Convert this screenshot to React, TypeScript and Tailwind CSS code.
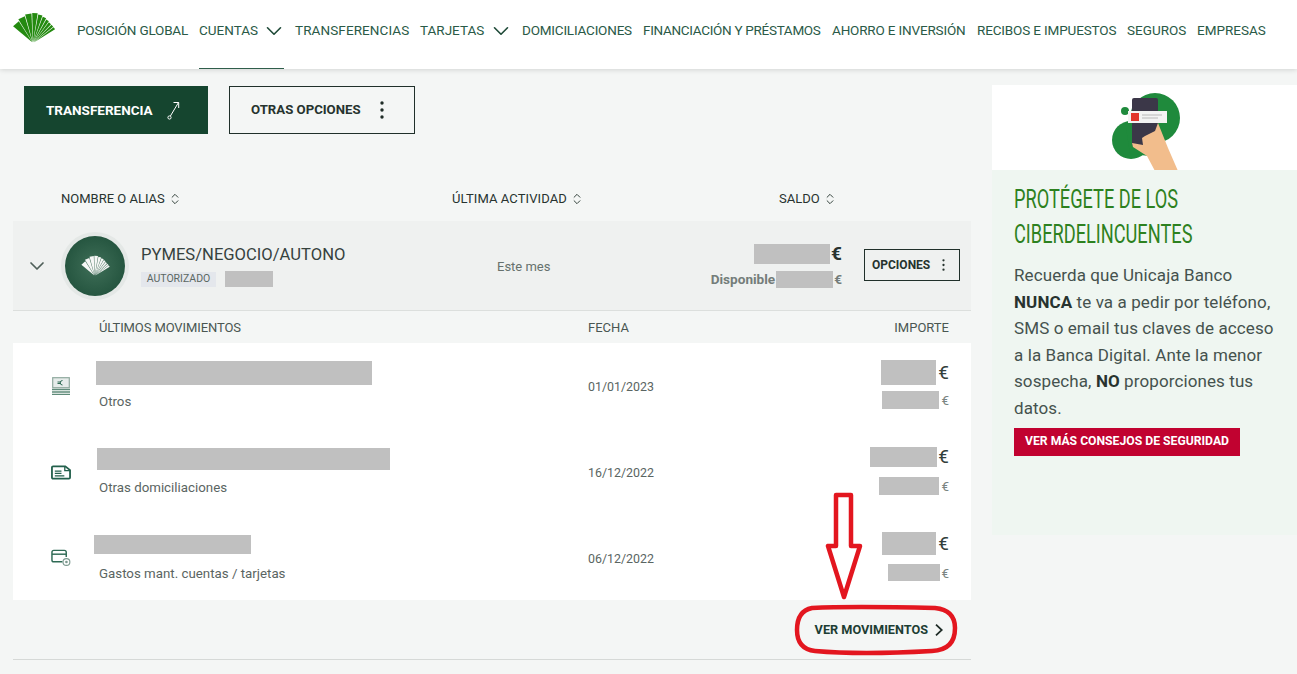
import { ChevronDown, ChevronsUpDown } from "lucide-react";

const FONT = "font-['Roboto',sans-serif]";

const WEDGES: [number, number, number][] = [
  [-50, -33, 26], [-31.5, -17, 28], [-15.5, -3, 29.5], [-1.5, 9, 30], [10.5, 19, 29],
  [20.5, 28, 28], [29.5, 36, 27], [37.5, 44, 26], [45.5, 51, 26], [52.5, 58, 26],
];

function Fan({ color, className }: { color: string; className: string }) {
  const pt = (a: number, l: number) => {
    const r = (a * Math.PI) / 180;
    return `${(22 + Math.sin(r) * l).toFixed(2)} ${(31 - Math.cos(r) * l).toFixed(2)}`;
  };
  return (
    <svg viewBox="0 0 46 34" className={className}>
      {WEDGES.map(([a, b, l]) => (
        <path key={a} d={`M${pt(a, 1)} L${pt(a, l)} L${pt(b, l)} Z`} fill={color} />
      ))}
    </svg>
  );
}

function Nav({ label, w, chevron, active }: { label: string; w: string; chevron?: boolean; active?: boolean }) {
  return (
    <div className={`relative flex h-full items-center whitespace-nowrap pb-[8px] text-[13.5px] text-[#2a5a47] ${w}`}>
      <span>{label}</span>
      {chevron && <ChevronDown className="ml-auto -mr-[3px] size-[26px] text-[#1f4a38]" strokeWidth={1.5} />}
      {active && <span className="absolute bottom-0 left-0 right-0 h-[1px] bg-[#2f5e4b]" />}
    </div>
  );
}

function Kebab({ className }: { className: string }) {
  return (
    <svg viewBox="0 0 4 18" className={className} fill="currentColor">
      <circle cx="2" cy="2" r="1.7" />
      <circle cx="2" cy="9" r="1.7" />
      <circle cx="2" cy="16" r="1.7" />
    </svg>
  );
}

function Sort({ label, className }: { label: string; className: string }) {
  return (
    <div className={`flex items-center text-[13px] leading-4 text-[#27332f] ${className}`}>
      <span className="whitespace-nowrap">{label}</span>
      <ChevronsUpDown className="ml-[3px] size-[14px] text-[#33423c]" strokeWidth={1.7} />
    </div>
  );
}

function Gray({ className }: { className: string }) {
  return <div className={`bg-[#c0c0c0] ${className}`} />;
}

function MoneyIcon() {
  return (
    <svg viewBox="0 0 18 18" className="size-[18px]">
      <rect x="0.7" y="0.7" width="16.6" height="10" fill="#e6ecea" stroke="#8fa99e" strokeWidth="1.2" />
      <path d="M10.5 3.5 A2.2 2.2 0 1 0 10.5 8 M5.5 5 H9 M5.5 6.5 H9" fill="none" stroke="#2f6b55" strokeWidth="1" />
      <path d="M0 12.5 H18 M0 15 H18 M0 17.4 H18" stroke="#5f8b7a" strokeWidth="1.3" />
    </svg>
  );
}
function DocIcon() {
  return (
    <svg viewBox="0 0 21 15" className="h-[15px] w-[21px]" fill="none" stroke="#23604c" strokeWidth="1.9">
      <path d="M1 2.2 Q1 1 2.2 1 H15 L20 5 V12.8 Q20 14 18.8 14 H2.2 Q1 14 1 12.8 Z" />
      <path d="M14.5 1 V5.5 H20 M4 6 H11 M4 8.5 H11 M4 11 H14" strokeWidth="1.4" />
    </svg>
  );
}
function CardIcon() {
  return (
    <svg viewBox="0 0 21 18" className="h-[18px] w-[21px]" fill="none" stroke="#2e6a55" strokeWidth="1.5">
      <path d="M12 13 H3 Q1 13 1 11 V3 Q1 1 3 1 H14 Q16 1 16 3 V8" />
      <path d="M1 5 H16" />
      <circle cx="16.2" cy="13.2" r="3.6" stroke="#7d9a90" strokeWidth="1.2" />
      <circle cx="16.2" cy="13.2" r="1.4" fill="#7d9a90" stroke="none" />
    </svg>
  );
}

function Row({
  h, icon, left, top, blockW, blockH, gap, sub, date, amtTop, bigW, bigH, smallW, smallH, amtGap, bigMr, smallMr,
}: {
  h: string; icon: React.ReactNode; left: string; top: string; blockW: string; blockH: string; gap: string; sub: string; date: string;
  amtTop: string; bigW: string; bigH: string; smallW: string; smallH: string; amtGap: string; bigMr: string; smallMr: string;
}) {
  return (
    <div className={`flex ${h}`}>
      <div className="ml-[38px] flex w-[20px] items-center justify-center">{icon}</div>
      <div className={`w-[517px] ${top}`}>
        <Gray className={`${left} ${blockW} ${blockH}`} />
        <div className={`ml-[28px] text-[13.3px] leading-4 text-[#5a6562] ${gap}`}>{sub}</div>
      </div>
      <div className="flex w-[200px] items-center pt-[3px] text-[12.4px] text-[#5a6562]">{date}</div>
      <div className={`flex flex-1 flex-col items-end pr-[22px] ${amtTop}`}>
        <div className="flex items-center">
          <Gray className={`${bigW} ${bigH} ${bigMr}`} />
          <span className="text-[19px] leading-5 text-[#33403c]">€</span>
        </div>
        <div className={`flex items-center ${amtGap}`}>
          <Gray className={`${smallW} ${smallH} ${smallMr}`} />
          <span className="text-[13.5px] leading-4 text-[#7a8582]">€</span>
        </div>
      </div>
    </div>
  );
}

export default function App() {
  return (
    <div className={`relative h-screen overflow-hidden bg-[#f4f6f5] ${FONT}`}>
      <header className="relative z-10 flex h-[69px] bg-white shadow-[0_1px_5px_rgba(0,0,0,0.14)]">
        <div className="w-[77px] shrink-0 pl-[11px] pt-[12px]">
          <Fan color="#248a10" className="h-[34px] w-[46px]" />
        </div>
        <div className="flex h-full items-stretch gap-[11px]">
          <Nav label="POSICIÓN GLOBAL" w="w-[111px] tracking-[-0.2px]" />
          <Nav label="CUENTAS" w="w-[85px]" chevron active />
          <Nav label="TRANSFERENCIAS" w="w-[114px] tracking-[0.1px]" />
          <Nav label="TARJETAS" w="w-[91px]" chevron />
          <Nav label="DOMICILIACIONES" w="w-[110px] tracking-[-0.2px]" />
          <Nav label="FINANCIACIÓN Y PRÉSTAMOS" w="w-[178px] tracking-[-0.3px]" />
          <Nav label="AHORRO E INVERSIÓN" w="w-[134px] tracking-[-0.17px]" />
          <Nav label="RECIBOS E IMPUESTOS" w="w-[139px] tracking-[-0.15px]" />
          <Nav label="SEGUROS" w="w-[59px]" />
          <Nav label="EMPRESAS" w="w-[68px]" />
        </div>
      </header>

      <div className="flex">
        <main className="w-[971px] shrink-0 pl-[13px]">
          <div className="flex gap-[21px] pl-[11px] pt-[17px]">
            <button className="flex h-[48px] w-[184px] items-center bg-[#15452f] pl-[22px] text-[13.5px] font-bold text-white">
              TRANSFERENCIA
              <svg viewBox="0 0 14 20" className="ml-[14px] h-[20px] w-[14px]" fill="none" stroke="#ffffff" strokeWidth="1">
                <circle cx="2.5" cy="17.5" r="1.6" />
                <path d="M3.4 16 L11.5 2.5 M6.5 2.5 H11.7 V8" />
              </svg>
            </button>
            <button className="flex h-[48px] w-[186px] items-center border border-[#20302a] pl-[21px] text-[13.2px] font-bold text-[#26332e]">
              OTRAS OPCIONES
              <Kebab className="ml-[19px] h-[18px] w-[4px] text-[#1f2c27]" />
            </button>
          </div>

          <div className="mt-[57px] flex h-[16px]">
            <Sort label="NOMBRE O ALIAS" className="ml-[48px] w-[391px]" />
            <Sort label="ÚLTIMA ACTIVIDAD" className="w-[327px] tracking-[0.1px]" />
            <Sort label="SALDO" className="" />
          </div>

          <div className="mt-[14px] flex h-[90px] items-center border-b border-[#dcdfdd] bg-[#eff1f0]">
            <ChevronDown className="ml-[12px] size-[24px] text-[#4f5f59]" strokeWidth={1.7} />
            <div className="ml-[16px] flex size-[60px] items-center justify-center rounded-full bg-[radial-gradient(circle,#3f6f58,#1b4b36)] shadow-[0_0_0_4px_#e4e8e6]">
              <Fan color="#f6f7f6" className="mt-[2px] h-[23px] w-[31px]" />
            </div>
            <div className="ml-[16px] w-[356px]">
              <div className="text-[16.6px] leading-[22px] text-[#36423e]">PYMES/NEGOCIO/AUTONO</div>
              <div className="mt-[5px] flex items-center">
                <span className="flex h-[15px] w-[75px] items-center justify-center bg-[#e4e7ec] text-[10.5px] text-[#5b6763]">AUTORIZADO</span>
                <Gray className="ml-[9px] h-[16px] w-[48px]" />
              </div>
            </div>
            <div className="w-[180px] pt-[2px] text-[13px] text-[#66716d]">Este mes</div>
            <div className="flex w-[165px] flex-col items-end">
              <div className="flex items-center">
                <Gray className="h-[20px] w-[76px]" />
                <span className="ml-[1px] text-[19px] font-bold leading-5 text-[#27332f]">€</span>
              </div>
              <div className="mt-[7px] flex items-center text-[13.6px] font-bold leading-[17px] text-[#747d7a]">
                <span>Disponible</span>
                <Gray className="ml-[1px] h-[17px] w-[57px]" />
                <span className="ml-[1px]">€</span>
              </div>
            </div>
            <button className="mb-[2px] ml-[22px] flex h-[32px] w-[96px] items-center border border-[#20302a] pl-[7px] text-[12px] font-bold text-[#26332e]">
              OPCIONES
              <Kebab className="ml-[12px] h-[12px] w-[3px] text-[#26332e]" />
            </button>
          </div>

          <div className="flex h-[32px] items-center pt-[2px] text-[13px] text-[#4a5652]">
            <div className="w-[575px] pl-[86px] tracking-[-0.1px]">ÚLTIMOS MOVIMIENTOS</div>
            <div className="w-[200px]">FECHA</div>
            <div className="flex-1 pr-[22px] text-right">IMPORTE</div>
          </div>

          <div className="bg-white">
            <Row h="h-[86px]" icon={<MoneyIcon />} left="ml-[25px]" top="pt-[18px]" blockW="w-[276px]" blockH="h-[24px]" gap="mt-[9px]" sub="Otros" date="01/01/2023"
              amtTop="pt-[17px]" bigW="w-[55px]" bigH="h-[25px]" smallW="w-[57px]" smallH="h-[18px]" amtGap="mt-[6px]" bigMr="mr-[2px]" smallMr="mr-[2px]" />
            <Row h="h-[86px]" icon={<DocIcon />} left="ml-[26px]" top="pt-[19px]" blockW="w-[293px]" blockH="h-[22px]" gap="mt-[10px]" sub="Otras domiciliaciones" date="16/12/2022"
              amtTop="pt-[18px]" bigW="w-[67px]" bigH="h-[20px]" smallW="w-[60px]" smallH="h-[18px]" amtGap="mt-[10px]" bigMr="mr-[1px]" smallMr="mr-[2px]" />
            <Row h="h-[85px]" icon={<CardIcon />} left="ml-[23px]" top="pt-[20px]" blockW="w-[157px]" blockH="h-[19px]" gap="mt-[12px]" sub="Gastos mant. cuentas / tarjetas" date="06/12/2022"
              amtTop="pt-[17px]" bigW="w-[54px]" bigH="h-[23px]" smallW="w-[52px]" smallH="h-[17px]" amtGap="mt-[9px]" bigMr="mr-[2px]" smallMr="mr-[1px]" />
          </div>

          <div className="flex h-[60px] items-center justify-end border-b border-[#d6d9d7] pr-[28px] pt-[1px] text-[12.7px] font-bold text-[#1d3d33]">
            VER MOVIMIENTOS
            <svg viewBox="0 0 8 12" className="ml-[7px] h-[12px] w-[8px]" fill="none" stroke="#1f2c27" strokeWidth="1.8">
              <path d="M1 0.7 L6.8 6 L1 11.3" />
            </svg>
          </div>
        </main>

        <aside className="ml-[21px] w-[305px] shrink-0 pt-[16px]">
          <div className="flex h-[85px] justify-center overflow-hidden bg-white pl-[2px]">
            <svg viewBox="0 0 90 84" className="mt-[3px] h-[84px] w-[90px] -translate-x-[1px]">
              <circle cx="31" cy="52" r="19" fill="#1f8a3c" />
              <circle cx="55" cy="30" r="25" fill="#1f8a3c" />
              <circle cx="25" cy="23" r="4" fill="#1f8a3c" />
              <path d="M26 40 L62 40 L50 68 L30 66 Z" fill="#1f8a3c" />
              <rect x="32" y="10" width="26" height="48" rx="2" fill="#3b3748" />
              <rect x="28" y="23" width="39" height="12" fill="#f3f3f3" />
              <rect x="31" y="25" width="8" height="8" fill="#e2352c" />
              <path d="M42 27 H62 M42 30 H58" stroke="#b9b9b9" strokeWidth="1" />
              <path d="M32 55 L43 57 L42 50 L45 48 L55 43 L58 35 L68 60 L78 83 L55 83 L47 68 L33 59 Z" fill="#f2bd8c" />
            </svg>
          </div>
          <div className="h-[365px] bg-[#eff6f1] pl-[22px] pt-[12px]">
            <h2 className="origin-left scale-x-[0.7] whitespace-nowrap text-[26px] leading-[35px] text-[#2d8120]">
              PROTÉGETE DE LOS<br />CIBERDELINCUENTES
            </h2>
            <p className="mt-[10px] whitespace-nowrap text-[17px] leading-[26.6px] tracking-[0.1px] text-[#45524e]">
              Recuerda que Unicaja Banco<br />
              <b className="text-[#27332f]">NUNCA</b> te va a pedir por teléfono,<br />
              SMS o email tus claves de acceso<br />
              a la Banca Digital. Ante la menor<br />
              sospecha, <b className="text-[#27332f]">NO</b> proporciones tus<br />
              datos.
            </p>
            <button className="mt-[6px] flex h-[28px] w-[226px] items-center justify-center bg-[#c10230] text-[12.2px] font-bold text-white">
              VER MÁS CONSEJOS DE SEGURIDAD
            </button>
          </div>
        </aside>
      </div>

      <svg viewBox="0 0 1297 674" className="pointer-events-none absolute left-0 top-0 z-20 h-[674px] w-[1297px]" fill="none" stroke="#e3161f">
        <path d="M836 495 H851 V546 H860 L844 597 L828 546 H836 Z" strokeWidth="4.5" strokeLinejoin="round" />
        <path d="M812 608 Q850 606 935 608 Q955 610 955 628 Q955 650 932 651 Q860 655 815 651 Q797 649 797 630 Q797 611 812 608 Z" strokeWidth="4.5" />
      </svg>
    </div>
  );
}
